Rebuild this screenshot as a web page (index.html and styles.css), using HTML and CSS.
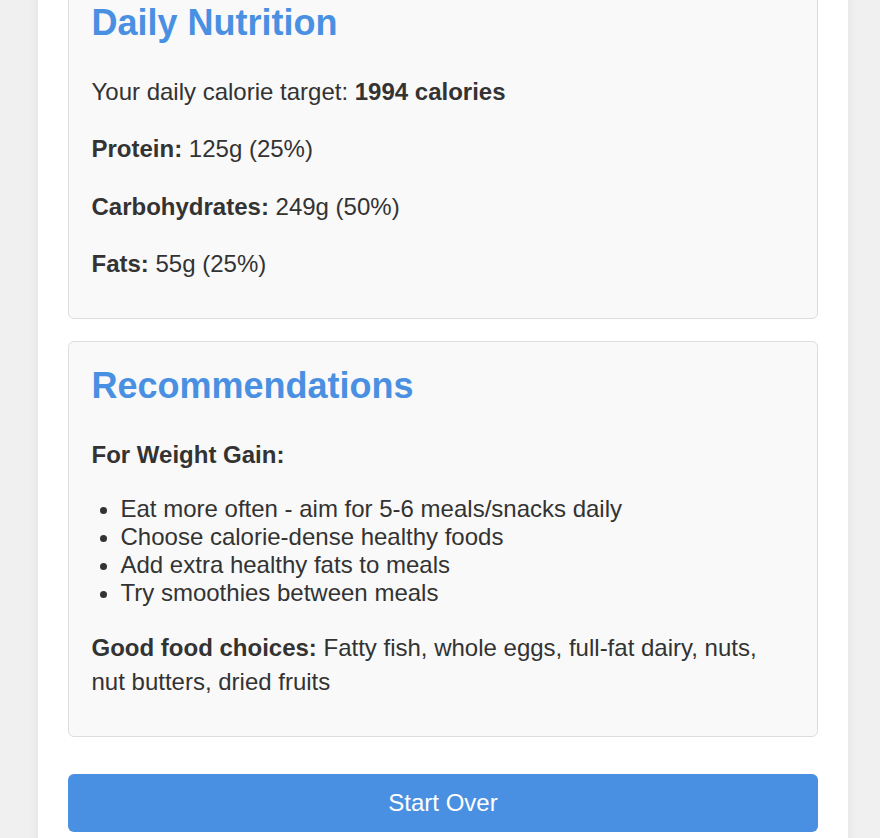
FILE: index.html
```html
<!DOCTYPE html>
<html lang="en">
<head>
<meta charset="utf-8">
<title>Daily Nutrition</title>
<link rel="stylesheet" href="styles.css">
</head>
<body>
<div class="container">
  <section class="card card-first">
    <h2>Daily Nutrition</h2>
    <p>Your daily calorie target: <strong>1994 calories</strong></p>
    <p><strong>Protein:</strong> 125g (25%)</p>
    <p><strong>Carbohydrates:</strong> 249g (50%)</p>
    <p><strong>Fats:</strong> 55g (25%)</p>
  </section>
  <section class="card">
    <h2>Recommendations</h2>
    <p><strong>For Weight Gain:</strong></p>
    <ul>
      <li>Eat more often - aim for 5-6 meals/snacks daily</li>
      <li>Choose calorie-dense healthy foods</li>
      <li>Add extra healthy fats to meals</li>
      <li>Try smoothies between meals</li>
    </ul>
    <p><strong>Good food choices:</strong> Fatty fish, whole eggs, full-fat dairy, nuts, nut butters, dried fruits</p>
  </section>
  <button class="btn" type="button">Start Over</button>
</div>
</body>
</html>
```

FILE: styles.css
```css
html, body {
  margin: 0;
  padding: 0;
  background: #f0f0f0;
}

body {
  font-family: "Liberation Sans", Arial, sans-serif;
  font-size: 24px;
  color: #333;
  overflow: hidden;
}

.container {
  width: 810px;
  margin-left: 38px;
  background: #fff;
  padding: 0 30px 30px;
  box-sizing: border-box;
  box-shadow: 0 0 12px rgba(0, 0, 0, 0.06);
  min-height: 900px;
}

.card {
  background: #f9f9f9;
  border: 1px solid #ddd;
  border-radius: 6px;
  padding: 22.5px 22.5px 13px;
  margin-bottom: 22.5px;
}

.card-first {
  margin-top: -22px;
}

.card h2 {
  color: #4a90e2;
  font-size: 36px;
  font-weight: bold;
  margin: 0 0 31px;
  line-height: normal;
}

.card p {
  margin: 24px 0;
  line-height: 1.4;
}

.card ul {
  margin: 24px 0;
  padding-left: 29px;
  line-height: normal;
}

.btn {
  display: block;
  width: 100%;
  margin-top: 37.5px;
  background: #4a90e2;
  color: #fff;
  border: none;
  border-radius: 6px;
  padding: 15px;
  font-family: "Liberation Sans", Arial, sans-serif;
  font-size: 24px;
  line-height: normal;
  cursor: pointer;
}
```
